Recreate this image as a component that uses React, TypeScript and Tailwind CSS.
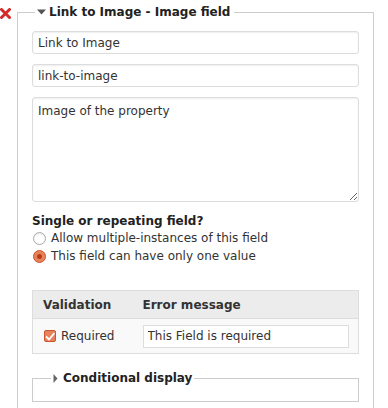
import React from "react";

const font = { fontFamily: '"DejaVu Sans", "Liberation Sans", sans-serif' };

const RemoveIcon = () => (
  <svg width="11" height="11" viewBox="0 0 11 11" className="absolute left-0 top-[8px]">
    <path d="M1.5 1.5 L9.5 9.5 M9.5 1.5 L1.5 9.5" stroke="#d12b2b" strokeWidth="3" strokeLinecap="round" />
  </svg>
);

const Caret = ({ open }: { open: boolean }) =>
  open ? (
    <svg width="9" height="6" viewBox="0 0 9 6" className="mr-[3px]">
      <path d="M0 0.5 H9 L4.5 5.5 Z" fill="#555" />
    </svg>
  ) : (
    <svg width="5" height="9" viewBox="0 0 5 9" className="mr-[5px]">
      <path d="M0.5 0 V9 L4.5 4.5 Z" fill="#666" />
    </svg>
  );

export default function App() {
  return (
    <div className="relative w-[388px] h-[408px] overflow-hidden bg-white text-[12px] text-[#333]" style={font}>
      <RemoveIcon />
      <fieldset className="ml-[17px] mt-[4px] w-[357px] border border-[#ccc] px-[14px] pb-6">
        <legend className="ml-[3px] flex items-center px-[2px] pr-[4px] font-bold leading-[16px] text-[#222]">
          <Caret open />
          Link to Image - Image field
        </legend>

        <div className="mt-[11px] flex flex-col gap-[10px]">
          <input
            readOnly
            value="Link to Image"
            className="h-[23px] w-full rounded-[3px] border border-[#ddd] px-[5px] shadow-[inset_0_1px_2px_rgba(0,0,0,0.07)] outline-none"
          />
          <input
            readOnly
            value="link-to-image"
            className="h-[23px] w-full rounded-[3px] border border-[#ddd] px-[5px] shadow-[inset_0_1px_2px_rgba(0,0,0,0.07)] outline-none"
          />
          <textarea
            readOnly
            value="Image of the property"
            className="h-[105px] w-full resize-y rounded-[3px] border border-[#ddd] px-[5px] py-[4px] leading-[18px] shadow-[inset_0_1px_2px_rgba(0,0,0,0.07)] outline-none"
          />
        </div>

        <div className="mt-[11px] leading-[17px]">
          <div className="font-bold text-[#222]">Single or repeating field?</div>
          <label className="flex items-center">
            <span className="mr-[5px] ml-[1px] h-[13px] w-[13px] rounded-full border border-[#aaa] bg-white shadow-[inset_0_1px_2px_rgba(0,0,0,0.1)]" />
            Allow multiple-instances of this field
          </label>
          <label className="mt-[1px] flex items-center">
            <span className="mr-[5px] ml-[1px] flex h-[13px] w-[13px] items-center justify-center rounded-full border border-[#c9562e] bg-[#e8825c]">
              <span className="h-[5px] w-[5px] rounded-full bg-[#b83d12]" />
            </span>
            This field can have only one value
          </label>
        </div>

        <table className="mt-[25px] w-full border border-[#ddd] border-collapse">
          <thead>
            <tr className="h-[28px] bg-[#ececec] border-b border-[#ddd]">
              <th className="w-[110px] pl-[10px] text-left font-bold text-[#333]">Validation</th>
              <th className="text-left font-bold text-[#333]">Error message</th>
            </tr>
          </thead>
          <tbody>
            <tr className="h-[35px] bg-[#f9f9f9]">
              <td className="pl-[11px]">
                <span className="flex items-center">
                  <span className="mr-[5px] flex h-[12px] w-[12px] items-center justify-center rounded-[2px] border border-[#c9562e] bg-[#e8825c]">
                    <svg width="10" height="9" viewBox="0 0 10 9">
                      <path d="M1 4.5 L4 7.5 L9.5 1" stroke="#fff" strokeWidth="1.8" fill="none" />
                    </svg>
                  </span>
                  Required
                </span>
              </td>
              <td className="pr-[9px]">
                <input
                  readOnly
                  value="This Field is required"
                  className="h-[23px] w-full border border-[#ddd] bg-white px-[4px] outline-none"
                />
              </td>
            </tr>
          </tbody>
        </table>

        <fieldset className="mt-[16px] h-[32px] border border-[#ccc]">
          <legend className="ml-[18px] flex items-center px-[2px] font-bold leading-[16px] text-[#222]">
            <Caret open={false} />
            Conditional display
          </legend>
        </fieldset>
      </fieldset>
    </div>
  );
}
